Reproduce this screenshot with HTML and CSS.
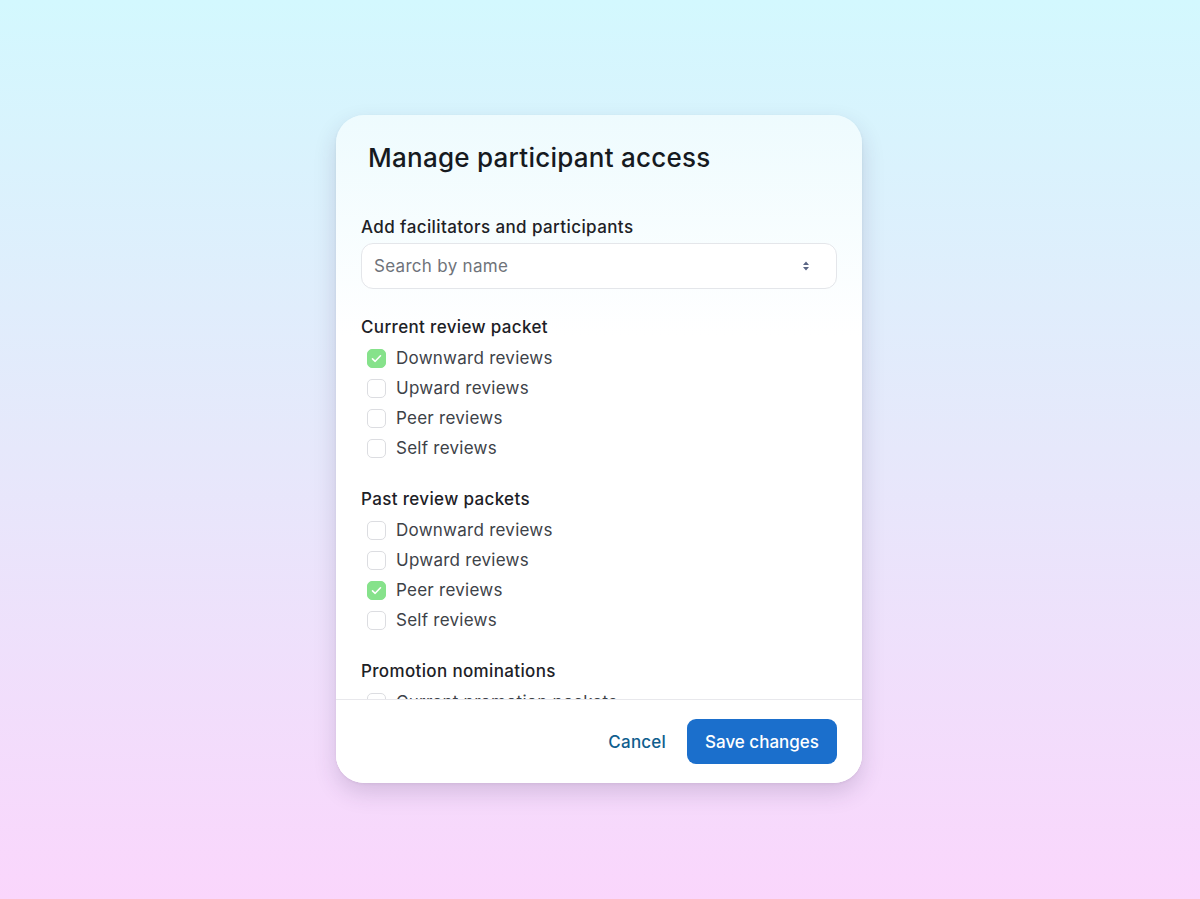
FILE: index.html
```html
<!DOCTYPE html>
<html lang="en">
<head>
<meta charset="utf-8">
<title>Manage participant access</title>
<link rel="stylesheet" href="styles.css">
</head>
<body>
<div class="stage">
  <div class="card">
    <div class="card-body">
      <h1 class="title">Manage participant access</h1>
      <div class="field">
        <div class="label">Add facilitators and participants</div>
        <div class="select">
          <span class="placeholder">Search by name</span>
          <svg class="chev" width="8" height="12" viewBox="0 0 8 12"><path d="M4 1.5 L7 5 H1 Z M4 10.5 L7 7 H1 Z" fill="#5b6685"/></svg>
        </div>
      </div>
      <div class="section">
        <div class="section-title">Current review packet</div>
        <label class="item"><span class="box checked"><svg width="13" height="13" viewBox="0 0 13 13"><path d="M2.5 6.8 L5.2 9.3 L10.5 3.8" fill="none" stroke="#fff" stroke-width="1.6" stroke-linecap="round" stroke-linejoin="round"/></svg></span>Downward reviews</label>
        <label class="item"><span class="box"></span>Upward reviews</label>
        <label class="item"><span class="box"></span>Peer reviews</label>
        <label class="item"><span class="box"></span>Self reviews</label>
      </div>
      <div class="section">
        <div class="section-title">Past review packets</div>
        <label class="item"><span class="box"></span>Downward reviews</label>
        <label class="item"><span class="box"></span>Upward reviews</label>
        <label class="item"><span class="box checked"><svg width="13" height="13" viewBox="0 0 13 13"><path d="M2.5 6.8 L5.2 9.3 L10.5 3.8" fill="none" stroke="#fff" stroke-width="1.6" stroke-linecap="round" stroke-linejoin="round"/></svg></span>Peer reviews</label>
        <label class="item"><span class="box"></span>Self reviews</label>
      </div>
      <div class="section">
        <div class="section-title">Promotion nominations</div>
        <label class="item"><span class="box"></span>Current promotion packets</label>
      </div>
    </div>
    <div class="card-footer">
      <button class="btn-link">Cancel</button>
      <button class="btn-primary">Save changes</button>
    </div>
  </div>
</div>
</body>
</html>
```

FILE: styles.css
```css
* { box-sizing: border-box; }
html, body { margin: 0; padding: 0; }
body {
  font-family: Inter, "Noto Sans", "Liberation Sans", sans-serif;
  background: linear-gradient(180deg, #d3f8fe 0%, #e6e8fb 50%, #fad6fc 100%);
  height: 899px;
  overflow: hidden;
}
.stage {
  height: 899px;
  display: flex;
  align-items: center;
  justify-content: center;
}
.card {
  width: 526px;
  height: 668px;
  border-radius: 28px;
  background: linear-gradient(180deg, #eefbfe 0px, #ffffff 220px);
  box-shadow: 0 10px 22px rgba(60, 40, 90, 0.17), 0 1px 3px rgba(0,0,0,0.06);
  display: flex;
  flex-direction: column;
  overflow: hidden;
  margin-left: -2px;
  margin-top: -1px;
}
.card-body {
  flex: 1;
  overflow: hidden;
  padding: 26px 25px 0 25px;
}
.title {
  margin: 0 0 38px 7px;
  font-size: 26px;
  line-height: 34px;
  font-weight: 500;
  color: #161a1f;
  letter-spacing: 0.25px;
}
.label {
  font-size: 17px;
  line-height: 28px;
  font-weight: 500;
  color: #1d2126;
  margin-bottom: 2px;
  letter-spacing: 0.4px;
}
.select {
  height: 46px;
  border: 1px solid #e4e6ea;
  border-radius: 12px;
  background: #fff;
  display: flex;
  align-items: center;
  justify-content: space-between;
  padding: 0 26px 0 12px;
}
.placeholder {
  font-size: 17px;
  color: #6f737a;
  letter-spacing: 0.3px;
}
.chev { display: block; }
.section { margin-top: 23px; }
.section + .section { margin-top: 21px; }
.section-title {
  font-size: 17px;
  line-height: 30px;
  font-weight: 500;
  color: #1d2126;
  margin-bottom: 1px;
  letter-spacing: 0.35px;
}
.item {
  display: flex;
  align-items: center;
  height: 30px;
  font-size: 17px;
  color: #3d4248;
  padding-left: 6px;
  letter-spacing: 0.25px;
}
.box {
  width: 19px;
  height: 19px;
  border: 1px solid #dcdde1;
  border-radius: 5px;
  background: #fff;
  margin-right: 10px;
  display: flex;
  align-items: center;
  justify-content: center;
  flex: none;
}
.box.checked {
  background: #86e28b;
  border-color: #86e28b;
}
.card-footer {
  height: 84px;
  flex: none;
  border-top: 1px solid #e8e8ec;
  background: #fff;
  display: flex;
  align-items: center;
  justify-content: flex-end;
  padding: 0 25px 0 0;
  gap: 21px;
}
.btn-link {
  border: 0;
  background: none;
  font-family: inherit;
  font-size: 17px;
  color: #0f5e8e;
  padding: 0;
  font-weight: 500;
  letter-spacing: 0.2px;
}
.btn-primary {
  height: 45px;
  width: 150px;
  border: 0;
  border-radius: 9px;
  background: #1b6fcc;
  color: #fff;
  font-family: inherit;
  font-size: 17px;
  font-weight: 500;
}
```
